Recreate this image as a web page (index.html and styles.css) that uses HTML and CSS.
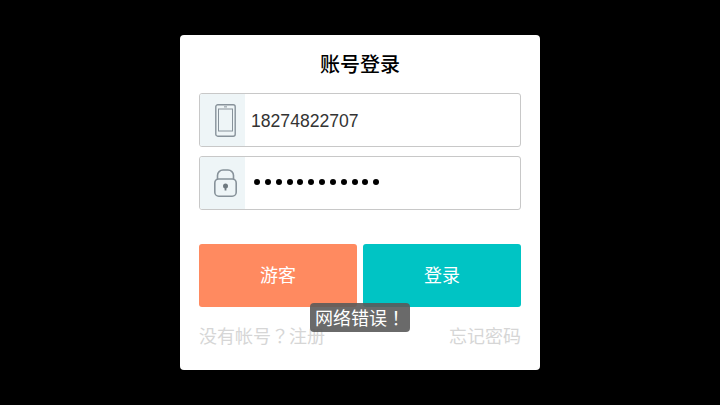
FILE: index.html
```html
<!DOCTYPE html>
<html lang="zh-CN">
<head>
<meta charset="utf-8">
<title>账号登录</title>
<link rel="stylesheet" href="styles.css">
</head>
<body>
<main class="card">
  <h1 class="title">账号登录</h1>
  <div class="fields">
    <div class="field">
      <span class="field-icon">
        <svg width="21" height="33" viewBox="0 0 21 33" fill="none" stroke="#87929a" stroke-width="1.4">
          <rect x="0.8" y="0.8" width="19.4" height="31.4" rx="2"/>
          <rect x="3.5" y="5" width="14" height="22" stroke-width="1"/>
          <path d="M9 2.9h3" stroke-width="1"/>
        </svg>
      </span>
      <span class="field-value">18274822707</span>
    </div>
    <div class="field">
      <span class="field-icon">
        <svg width="23" height="28" viewBox="0 0 23 28" fill="none" stroke="#87929a" stroke-width="1.6">
          <path d="M3.5 10V6.5a5.5 5.5 0 0 1 5.5-5.5h5a5.5 5.5 0 0 1 5.5 5.5V10"/>
          <rect x="0.8" y="10" width="21.4" height="17.2" rx="4"/>
          <circle cx="11.5" cy="17" r="2.5" fill="#6f7a80" stroke="none"/>
          <path d="M11.5 17.5v4" stroke="#6f7a80" stroke-width="1.8"/>
        </svg>
      </span>
      <span class="field-value field-dots">
        <i></i><i></i><i></i><i></i><i></i><i></i><i></i><i></i><i></i><i></i><i></i><i></i>
      </span>
    </div>
  </div>
  <div class="actions">
    <button class="btn btn-guest" type="button">游客</button>
    <button class="btn btn-login" type="button">登录</button>
  </div>
  <div class="links">
    <a class="link">没有帐号<span class="punct" lang="zh-Hant">？</span>注册</a>
    <a class="link">忘记密码</a>
  </div>
  <div class="toast">网络错误<span class="punct" lang="zh-Hant">！</span></div>
</main>
</body>
</html>
```
FILE: styles.css
```css
* { box-sizing: border-box; }
html, body { height: 100%; }
body {
  margin: 0;
  background: #000;
  display: flex;
  justify-content: center;
  align-items: center;
  font-family: "Noto Sans CJK SC", "Liberation Sans", sans-serif;
}
.card {
  position: relative;
  width: 360px;
  height: 335px;
  padding: 14px 19px 0;
  background: #fff;
  border-radius: 4px;
}
.title {
  margin: 0;
  height: 30px;
  font-size: 20px;
  line-height: 30px;
  font-weight: 500;
  text-align: center;
  color: #000;
}
.fields {
  margin-top: 14px;
  display: flex;
  flex-direction: column;
  gap: 9px;
}
.field {
  height: 54px;
  display: flex;
  align-items: stretch;
  border: 1px solid #c8c8c8;
  border-radius: 3px;
  overflow: hidden;
}
.field-icon {
  width: 45px;
  padding-left: 6px;
  background: #eef5f7;
  display: flex;
  align-items: center;
  justify-content: center;
}
.field-value {
  padding: 1px 0 0 6px;
  font-family: "Liberation Sans", sans-serif;
  font-size: 17.6px;
  line-height: 52px;
  color: #333;
}
.field-dots {
  padding: 0 0 2px 9px;
  display: flex;
  align-items: center;
  gap: 4.85px;
}
.field-dots i {
  width: 6px;
  height: 6px;
  border-radius: 50%;
  background: #000;
}
.actions {
  margin-top: 34px;
  display: flex;
  gap: 6px;
}
.btn {
  flex: 1;
  height: 63px;
  padding: 0 0 3px;
  border: 0;
  border-radius: 3px;
  color: #fff;
  font: inherit;
  font-size: 18px;
}
.btn-guest { background: #ff8a60; }
.btn-login { background: #00c4c4; }
.links {
  margin-top: 15px;
  display: flex;
  justify-content: space-between;
  font-size: 18px;
  line-height: 26px;
  color: #d6d6d6;
}
.punct {
  font-family: "Noto Sans CJK TC", sans-serif;
  font-weight: 400;
}
.toast {
  position: absolute;
  left: 130px;
  top: 268px;
  width: 100px;
  height: 29px;
  border-radius: 4px;
  background: rgba(90, 90, 90, 0.9);
  color: #fff;
  font-size: 18px;
  line-height: 29px;
  text-align: center;
  white-space: nowrap;
}
```
